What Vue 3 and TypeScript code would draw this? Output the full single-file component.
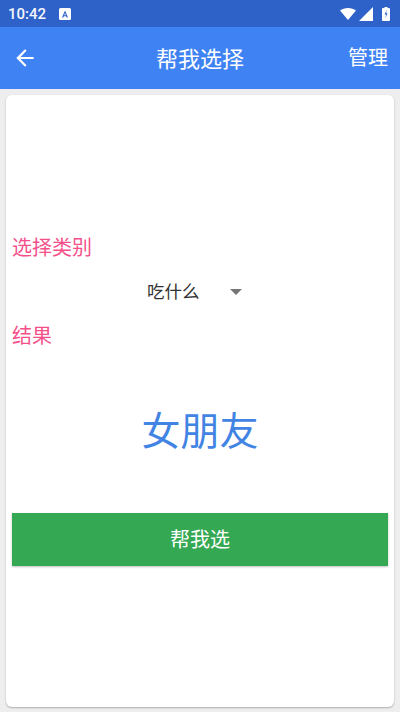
<template>
  <div class="page">
    <div class="status-bar">
      <span class="time">10:42</span>
      <svg class="a-icon" viewBox="0 0 12 12" width="12" height="12">
        <rect width="12" height="12" rx="1.5" fill="#fff" />
        <path d="M3 9.500 6 2.500l3 7H7.600L7.200 8.300H4.800L4.400 9.500zM5.200 7.200h1.600L6 5z" fill="#2f62c9" fill-rule="evenodd" />
      </svg>
      <span class="spacer"></span>
      <svg class="wifi" viewBox="0 0 16 12" width="16" height="12">
        <path d="M0 2.500C2 .900 5 0 8 0s6 .900 8 2.500L8 12z" fill="#fff" />
      </svg>
      <svg class="signal" viewBox="0 0 14 14" width="14" height="14">
        <path d="M0 14 14 0v14z" fill="#fff" />
      </svg>
      <svg class="battery" viewBox="0 0 8 14" width="8" height="14">
        <path d="M2.500 0h3v1H7a1 1 0 0 1 1 1v11a1 1 0 0 1-1 1H1a1 1 0 0 1-1-1V2a1 1 0 0 1 1-1h1.500z" fill="#fff" />
        <path d="M4.800 2.800 2.600 7.600h1.500l-.8 3.600 2.200-5H4.100z" fill="#2f62c9" />
      </svg>
    </div>

    <header class="app-bar">
      <svg class="back" viewBox="0 0 24 24" width="26" height="26">
        <path d="M20 11H7.830l5.590-5.590L12 4l-8 8 8 8 1.410-1.410L7.830 13H20z" fill="#fff" />
      </svg>
      <h1 class="title">帮我选择</h1>
      <span class="action">管理</span>
    </header>

    <main class="card">
      <div class="label first">选择类别</div>
      <div class="select-row">
        <div class="select">
          <span class="select-text">{{ category }}</span>
          <i class="caret"></i>
        </div>
      </div>
      <div class="label">结果</div>
      <div class="result">{{ result }}</div>
      <button class="pick">帮我选</button>
    </main>
  </div>
</template>

<script setup lang="ts">
import { ref } from 'vue'

const category = ref('吃什么')
const result = ref('女朋友')
</script>

<style>
html,
body {
  margin: 0;
  background: #eeeeee;
}
</style>

<style scoped>
.page {
  width: 400px;
  height: 712px;
  display: flex;
  flex-direction: column;
  overflow: hidden;
  background: #eeeeee;
  font-family: Roboto, "Noto Sans CJK SC", sans-serif;
}

.status-bar {
  height: 27px;
  flex: none;
  display: flex;
  align-items: center;
  padding: 0 10px 0 8px;
  background: #2f62c9;
  color: #fff;
}

.time {
  font-size: 15px;
  font-weight: 500;
  opacity: 0.95;
}

.a-icon {
  margin-left: 13px;
}

.spacer {
  flex: 1;
}

.signal {
  margin-left: 3px;
}

.battery {
  margin-left: 9px;
}

.app-bar {
  height: 62px;
  flex: none;
  display: grid;
  grid-template-columns: 1fr auto 1fr;
  align-items: center;
  padding: 0 12px;
  background: #3f82f3;
  color: #fff;
}

.title {
  margin: 0 0 3px;
  font-size: 22px;
  font-weight: 400;
}

.action {
  justify-self: end;
  margin-bottom: 3px;
  font-size: 20px;
}

.card {
  flex: 1;
  margin: 6px 6px 5px;
  padding: 0 6px;
  border-radius: 6px;
  background: #fff;
  box-shadow: 0 1px 2px rgba(0, 0, 0, 0.28);
  display: flex;
  flex-direction: column;
}

.label {
  font-size: 20px;
  line-height: 28px;
  color: #f4508a;
}

.first {
  margin-top: 139px;
}

.select-row {
  display: flex;
  justify-content: center;
  height: 60px;
  padding-bottom: 2px;
  box-sizing: border-box;
  align-items: center;
}

.select {
  width: 95px;
  display: flex;
  align-items: center;
  justify-content: space-between;
  margin-left: -11px;
  font-size: 17.5px;
  color: #333;
}

.select-text {
  padding-bottom: 2px;
}

.caret {
  width: 0;
  height: 0;
  border-left: 6px solid transparent;
  border-right: 6px solid transparent;
  border-top: 6px solid #757575;
  margin-top: 1px;
}

.result {
  margin-top: 54px;
  text-align: center;
  font-size: 39px;
  line-height: 56px;
  color: #4284e4;
}

.pick {
  height: 53px;
  margin-top: 53px;
  padding: 0 0 3px;
  border: none;
  background: #34a853;
  color: #fff;
  font: inherit;
  font-size: 20px;
  box-shadow: 0 1px 2px rgba(0, 0, 0, 0.25);
}
</style>
